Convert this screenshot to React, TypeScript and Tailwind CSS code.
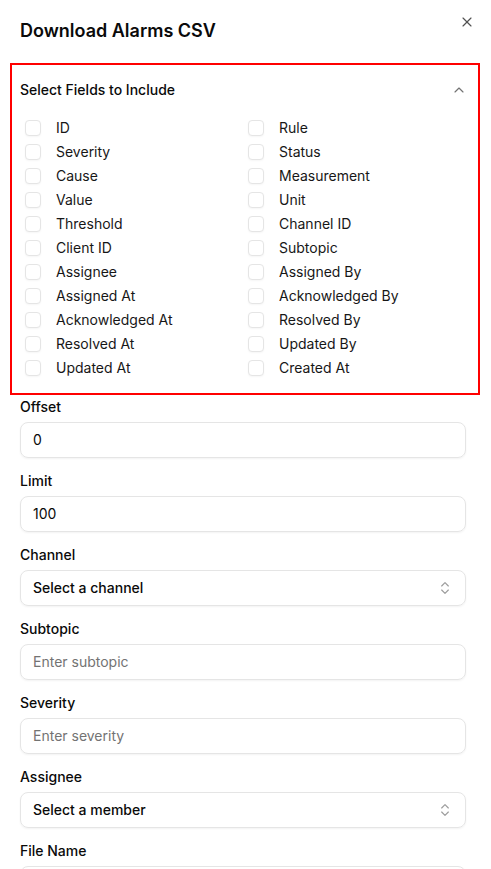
import { ChevronUp, ChevronsUpDown, X } from "lucide-react";

const fields = [
  ["ID", "Rule"],
  ["Severity", "Status"],
  ["Cause", "Measurement"],
  ["Value", "Unit"],
  ["Threshold", "Channel ID"],
  ["Client ID", "Subtopic"],
  ["Assignee", "Assigned By"],
  ["Assigned At", "Acknowledged By"],
  ["Acknowledged At", "Resolved By"],
  ["Resolved At", "Updated By"],
  ["Updated At", "Created At"],
];

function FieldCheck({ label }: { label: string }) {
  return (
    <label className="flex items-center h-6 px-[5px] gap-[15px] text-sm text-[#171717]">
      <span className="w-4 h-4 shrink-0 rounded-[4px] border border-[#e5e5e5] bg-white shadow-[0_1px_2px_rgba(0,0,0,0.04)]" />
      {label}
    </label>
  );
}

function TextField({ label, value, placeholder }: { label: string; value?: string; placeholder?: string }) {
  return (
    <div className="grid gap-2">
      <p className="text-sm leading-none font-medium text-[#0a0a0a]">{label}</p>
      <div className="h-9 rounded-lg border border-[#e5e5e5] shadow-[0_1px_2px_rgba(0,0,0,0.05)] px-3 flex items-center text-sm">
        {value ? (
          <span className="text-[#0a0a0a]">{value}</span>
        ) : (
          <span className="text-[#737373]">{placeholder}</span>
        )}
      </div>
    </div>
  );
}

function SelectField({ label, placeholder }: { label: string; placeholder: string }) {
  return (
    <div className="grid gap-2">
      <p className="text-sm leading-none font-medium text-[#0a0a0a]">{label}</p>
      <div className="h-9 rounded-lg border border-[#e5e5e5] shadow-[0_1px_2px_rgba(0,0,0,0.05)] px-3 flex items-center justify-between text-sm">
        <span className="font-medium text-[#0a0a0a]">{placeholder}</span>
        <ChevronsUpDown className="w-4 h-4 text-[#737373] opacity-70" strokeWidth={1.75} />
      </div>
    </div>
  );
}

export default function App() {
  return (
    <div
      className="relative w-[491px] h-[869px] overflow-hidden bg-white pl-5 pr-[25px] pt-[17px]"
      style={{ fontFamily: "Inter, 'Noto Sans', sans-serif" }}
    >
      <button className="absolute top-[14px] right-4 text-[#525252]">
        <X className="w-4 h-4" strokeWidth={1.75} />
      </button>

      <h2 className="text-lg leading-7 font-semibold text-[#0a0a0a]">Download Alarms CSV</h2>

      {/* Field picker (outlined) */}
      <div className="mt-[18px] -ml-[10px] -mr-[14px] border-2 border-[#ff0000] pl-2 pr-3 pt-[15px] pb-[13px]">
        <div className="flex items-center justify-between h-5">
          <span className="text-sm font-medium text-[#0a0a0a]">Select Fields to Include</span>
          <ChevronUp className="w-4 h-4 text-[#737373] -mr-px" strokeWidth={1.75} />
        </div>
        <div className="grid grid-cols-2 mt-4">
          {fields.map(([a, b]) => (
            <div key={a} className="contents">
              <FieldCheck label={a} />
              <FieldCheck label={b} />
            </div>
          ))}
        </div>
      </div>

      <div className="flex flex-col gap-4 mt-[5px]">
        <TextField label="Offset" value="0" />
        <TextField label="Limit" value="100" />
        <SelectField label="Channel" placeholder="Select a channel" />
        <TextField label="Subtopic" placeholder="Enter subtopic" />
        <TextField label="Severity" placeholder="Enter severity" />
        <SelectField label="Assignee" placeholder="Select a member" />
        <TextField label="File Name" placeholder="" />
      </div>
    </div>
  );
}
